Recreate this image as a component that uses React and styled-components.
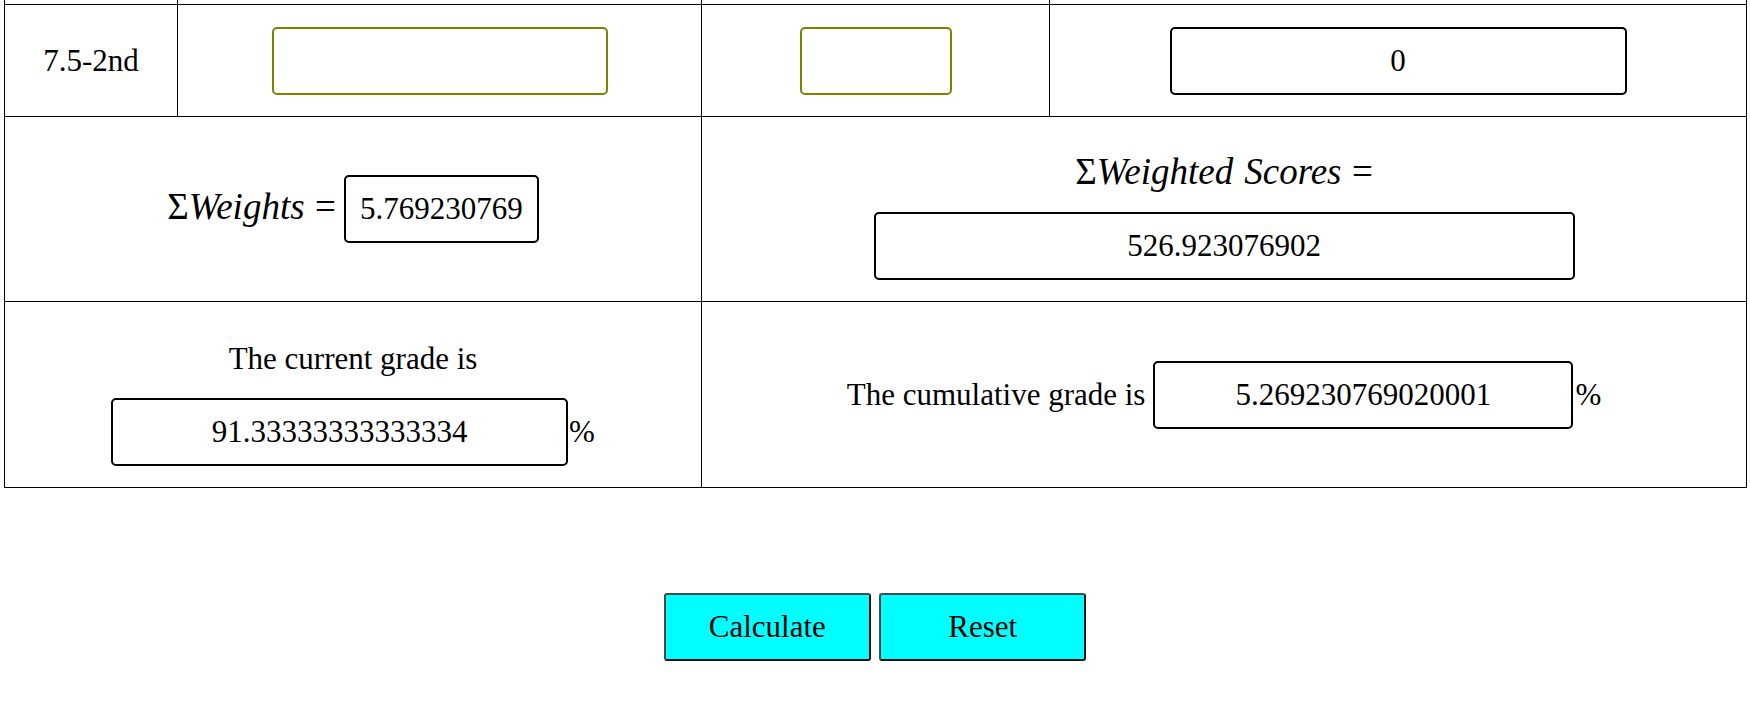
import React from 'react'
import styled, { createGlobalStyle } from 'styled-components'

const GlobalStyle = createGlobalStyle`
  body {
    margin: 0;
    background: #fff;
    color: #000;
    font-family: "Liberation Serif", "Times New Roman", serif;
    font-size: 31px;
  }
`

const Page = styled.main`
  padding: 0 4px 0 4px;
`

const Table = styled.table`
  width: 100%;
  border-collapse: collapse;
  table-layout: fixed;
`

const Row = styled.tr`
  height: ${(p) => p.$h}px;
`

const Cell = styled.td`
  border: 1px solid #000;
  padding: 0;
  text-align: center;
  vertical-align: middle;
`

const CutCell = styled.td`
  border: 1px solid #000;
  border-top: none;
  padding: 0;
  height: 4px;
`

const Field = styled.input`
  box-sizing: border-box;
  width: ${(p) => p.$w}px;
  height: 68px;
  padding: 0;
  border: 2px solid ${(p) => (p.$tone === 'olive' ? '#808000' : '#000')};
  border-radius: 5px;
  background: #fff;
  color: #000;
  font-family: inherit;
  font-size: 31px;
  text-align: center;
  outline: none;
`

const Inline = styled.div`
  display: flex;
  justify-content: center;
  align-items: baseline;
  gap: ${(p) => p.$gap || 0}px;
`

const Stack = styled.div`
  display: flex;
  flex-direction: column;
  align-items: center;
  gap: ${(p) => p.$gap || 0}px;
`

const Label = styled.span`
  line-height: ${(p) => (p.$lh ? `${p.$lh}px` : 'normal')};
  white-space: nowrap;
`

const MathLabel = styled.span`
  font-size: 37px;
  line-height: ${(p) => (p.$lh ? `${p.$lh}px` : 'normal')};
  white-space: nowrap;
`

const Sym = styled.span`
  font-style: normal;
`

const Ital = styled.i`
  font-style: italic;
  margin-right: ${(p) => (p.$space ? '0.3em' : '0')};
`

const Rel = styled.span`
  margin-left: 0.28em;
`

const Pct = styled.span`
  margin-left: ${(p) => p.$ml || 0}px;
`

const ButtonRow = styled.div`
  display: flex;
  justify-content: center;
  gap: 8.5px;
  margin-top: 105px;
`

const Button = styled.button`
  box-sizing: border-box;
  width: 207px;
  height: 68px;
  background: #00ffff;
  color: #000;
  border: 2px solid;
  border-color: #4a4a4a #111 #111 #4a4a4a;
  border-radius: 3px;
  font-family: inherit;
  font-size: 31px;
  cursor: pointer;
`

export default function App() {
  return (
    <Page>
      <GlobalStyle />
      <Table>
        <colgroup>
          <col style={{ width: 173 }} />
          <col style={{ width: 524 }} />
          <col style={{ width: 348 }} />
          <col style={{ width: 697 }} />
        </colgroup>
        <tbody>
          <tr>
            <CutCell />
            <CutCell />
            <CutCell />
            <CutCell />
          </tr>
          <Row $h={112}>
            <Cell>7.5-2nd</Cell>
            <Cell>
              <Field $w={336} $tone="olive" defaultValue="" />
            </Cell>
            <Cell>
              <Field $w={152} $tone="olive" defaultValue="" />
            </Cell>
            <Cell>
              <Field $w={457} value="0" readOnly />
            </Cell>
          </Row>
          <Row $h={185}>
            <Cell colSpan={2}>
              <Inline $gap={8}>
                <MathLabel>
                  <Sym>Σ</Sym>
                  <Ital>Weights</Ital>
                  <Rel>=</Rel>
                </MathLabel>
                <Field $w={195} value="5.769230769" readOnly />
              </Inline>
            </Cell>
            <Cell colSpan={2}>
              <Stack $gap={7}>
                <MathLabel $lh={67}>
                  <Sym>Σ</Sym>
                  <Ital $space>Weighted</Ital>
                  <Ital>Scores</Ital>
                  <Rel>=</Rel>
                </MathLabel>
                <Field $w={701} value="526.923076902" readOnly />
              </Stack>
            </Cell>
          </Row>
          <Row $h={186}>
            <Cell colSpan={2}>
              <Stack $gap={5}>
                <Label $lh={69}>The current grade is</Label>
                <Inline>
                  <Field $w={457} value="91.33333333333334" readOnly />
                  <Pct $ml={1}>%</Pct>
                </Inline>
              </Stack>
            </Cell>
            <Cell colSpan={2}>
              <Inline $gap={8}>
                <Label>The cumulative grade is</Label>
                <Inline>
                  <Field $w={420} value="5.269230769020001" readOnly />
                  <Pct $ml={2}>%</Pct>
                </Inline>
              </Inline>
            </Cell>
          </Row>
        </tbody>
      </Table>
      <ButtonRow>
        <Button type="button">Calculate</Button>
        <Button type="button">Reset</Button>
      </ButtonRow>
    </Page>
  )
}
